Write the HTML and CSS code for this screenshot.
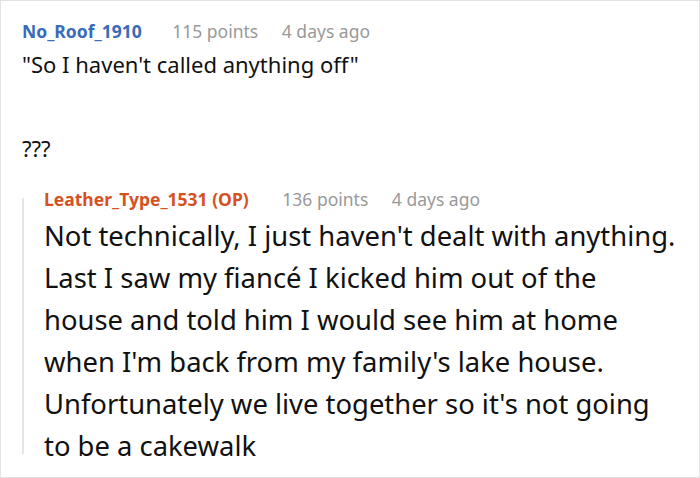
FILE: index.html
```html
<!DOCTYPE html>
<html>
<head>
    <title>Comments</title>
    <link rel="stylesheet" href="styles.css">
</head>
<body>
    <div class="thread">
        <div class="comment">
            <div class="meta">
                <span class="author">No_Roof_1910</span>
                <span class="info">115 points</span>
                <span class="info">4 days ago</span>
            </div>
            <div class="body">
                <p>"So I haven't called anything off"</p>
                <p>???</p>
            </div>
        </div>

        <div class="reply">
            <div class="meta">
                <span class="author op">Leather_Type_1531 (OP)</span>
                <span class="info">136 points</span>
                <span class="info">4 days ago</span>
            </div>
            <div class="body">
                <p>Not technically, I just haven't dealt with anything.<br>
                Last I saw my fiancé I kicked him out of the<br>
                house and told him I would see him at home<br>
                when I'm back from my family's lake house.<br>
                Unfortunately we live together so it's not going<br>
                to be a cakewalk</p>
            </div>
        </div>
    </div>
</body>
</html>
```

FILE: styles.css
```css
body {
    margin: 0;
    background-color: #fff;
    font-family: "Noto Sans", sans-serif;
}

.thread {
    width: 700px;
    height: 478px;
    box-sizing: border-box;
    border: 1px solid #e3e3e3;
    padding: 17px 0 0 21px;
    overflow: hidden;
}

.meta {
    font-size: 17.5px;
    line-height: 26px;
}

.author {
    color: #3a6ab8;
    font-weight: bold;
    margin-right: 26px;
}

.author.op {
    color: #d4521f;
    margin-right: 29px;
}

.info {
    color: #999;
    margin-right: 19px;
}

.comment .body {
    font-size: 22px;
    line-height: 30px;
    color: #111;
    margin-top: 5px;
}

.comment .body p {
    margin: 0 0 54px 0;
}

/* nested reply with the thread line on its left */
.reply {
    position: relative;
    margin-top: -31px;
    padding-left: 22px;
}

.reply::before {
    content: "";
    position: absolute;
    left: 0;
    top: 12px;
    bottom: 13px;
    width: 2px;
    background-color: #e6e6e6;
}

.reply .body {
    font-size: 27.4px;
    line-height: 42px;
    color: #111;
    margin-top: 3px;
    white-space: nowrap;
}

.reply .body p {
    margin: 0;
}
```
